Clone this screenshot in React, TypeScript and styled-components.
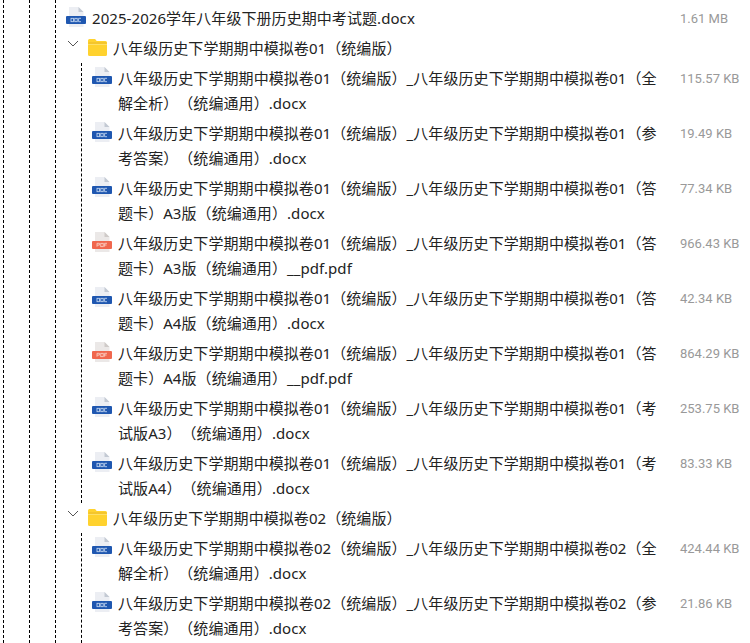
import React from 'react';
import styled, { createGlobalStyle } from 'styled-components';

const Global = createGlobalStyle`
  html, body { margin: 0; padding: 0; background: #fff; height: 643px; overflow: hidden; }
  body { font-family: "Noto Sans", "Noto Sans CJK SC", sans-serif; color: #222; text-spacing-trim: space-all; }
`;

const Page = styled.div`
  width: 750px;
  height: 643px;
  overflow: hidden;
  padding: 3px 0 0 3px;
  box-sizing: border-box;
`;

const OuterGuide = styled.div<{ $gap: number }>`
  border-left: 1px dashed #000;
  margin-top: -3px;
  padding-top: 3px;
  padding-left: ${p => p.$gap}px;
  min-height: 700px;
`;

const FileGuide = styled.div`
  border-left: 1px dashed #000;
  margin-left: 15px;
  padding-left: 10px;
`;

const Row = styled.div<{ $width: number }>`
  display: grid;
  grid-template-columns: 26px ${p => p.$width}px 1fr;
  align-items: start;
  padding: 2.5px 0;
  line-height: 25px;
  font-size: 15px;
`;

const FolderRow = styled.div`
  display: flex;
  align-items: center;
  height: 30px;
  padding-bottom: 2px;
  box-sizing: border-box;
  font-size: 15px;
`;

const Chevron = styled.svg`
  width: 12px;
  height: 8px;
  margin: -6px 9px 0 1px;
  flex: none;
`;

const FolderName = styled.span`
  margin-left: 6px;
  white-space: nowrap;
  letter-spacing: 0.07px;
`;

const IconCell = styled.div`
  height: 25px;
  padding-bottom: 3px;
  box-sizing: border-box;
  display: flex;
  align-items: center;
`;

const Name = styled.div<{ $pad: number }>`
  padding-right: ${p => p.$pad}px;
  word-break: break-all;
  letter-spacing: 0.07px;
`;

const Size = styled.div`
  font-family: Roboto, sans-serif;
  font-size: 13px;
  color: #999;
  white-space: nowrap;
`;

const Doc = () => (
  <svg width="20" height="20" viewBox="0 0 20 20">
    <path d="M3 0h9.500l5 5v15H3z" fill="#eceef3" />
    <path d="M12.500 0l5 5h-5z" fill="#c3c9d3" />
    <rect x="0" y="9" width="20" height="8" rx="1" fill="#1f57b0" />
    <g fill="none" stroke="#cfe0f6" strokeWidth="0.8">
      <rect x="5" y="11.300" width="2.400" height="3.400" />
      <rect x="8.800" y="11.300" width="2.400" height="3.400" />
      <path d="M15 11.300h-2.400v3.400H15" />
    </g>
  </svg>
);

const Pdf = () => (
  <svg width="20" height="20" viewBox="0 0 20 20">
    <path d="M3 0h9.500l5 5v15H3z" fill="#ebe8e7" />
    <path d="M12.500 0l5 5h-5z" fill="#cfcac8" />
    <rect x="0" y="9" width="20" height="8" rx="1" fill="#f0674d" />
    <g fill="none" stroke="#fbd7cc" strokeWidth="0.8">
      <path d="M5 14.700v-3.400h2.400v1.800H5" />
      <rect x="8.800" y="11.300" width="2.400" height="3.400" />
      <path d="M15 11.300h-2.400v3.400M12.600 13h2" />
    </g>
  </svg>
);

const Folder = () => (
  <svg width="19" height="17" viewBox="0 0 19 17">
    <path d="M1.500 0h5.600l1.600 2h8.800a1.500 1.500 0 0 1 1.500 1.500V15.500a1.500 1.500 0 0 1-1.500 1.500H1.500A1.500 1.500 0 0 1 0 15.500V1.500A1.500 1.500 0 0 1 1.500 0z" fill="#ffd22e" />
    <path d="M0.500 4h18" stroke="#e9b92a" strokeWidth="1" />
    <path d="M0 5h19v1H0z" fill="#ffe067" />
  </svg>
);

const ChevronIcon = () => (
  <Chevron viewBox="0 0 12 8">
    <path d="M1 1l5 5 5-5" fill="none" stroke="#555" strokeWidth="1" />
  </Chevron>
);

type FileEntry = { pdf?: boolean; name: string; size: string };

const a = '八年级历史下学期期中模拟卷01（统编版）_八年级历史下学期期中模拟卷01';
const b = '八年级历史下学期期中模拟卷02（统编版）_八年级历史下学期期中模拟卷02';

const group1: FileEntry[] = [
  { name: `${a}（全解全析）（统编通用）.docx`, size: '115.57 KB' },
  { name: `${a}（参考答案）（统编通用）.docx`, size: '19.49 KB' },
  { name: `${a}（答题卡）A3版（统编通用）.docx`, size: '77.34 KB' },
  { pdf: true, name: `${a}（答题卡）A3版（统编通用）__pdf.pdf`, size: '966.43 KB' },
  { name: `${a}（答题卡）A4版（统编通用）.docx`, size: '42.34 KB' },
  { pdf: true, name: `${a}（答题卡）A4版（统编通用）__pdf.pdf`, size: '864.29 KB' },
  { name: `${a}（考试版A3）（统编通用）.docx`, size: '253.75 KB' },
  { name: `${a}（考试版A4）（统编通用）.docx`, size: '83.33 KB' },
];

const group2: FileEntry[] = [
  { name: `${b}（全解全析）（统编通用）.docx`, size: '424.44 KB' },
  { name: `${b}（参考答案）（统编通用）.docx`, size: '21.86 KB' },
];

const Files = ({ items }: { items: FileEntry[] }) => (
  <FileGuide>
    {items.map(f => (
      <Row key={f.name} $width={562}>
        <IconCell>{f.pdf ? <Pdf /> : <Doc />}</IconCell>
        <Name $pad={20}>{f.name}</Name>
        <Size>{f.size}</Size>
      </Row>
    ))}
  </FileGuide>
);

const FolderHeader = ({ name }: { name: string }) => (
  <FolderRow>
    <ChevronIcon />
    <Folder />
    <FolderName>{name}</FolderName>
  </FolderRow>
);

export default function App() {
  return (
    <Page>
      <Global />
      <OuterGuide $gap={25}>
        <OuterGuide $gap={25}>
          <OuterGuide $gap={10}>
            <Row $width={588}>
              <IconCell><Doc /></IconCell>
              <Name $pad={0}>2025-2026学年八年级下册历史期中考试题.docx</Name>
              <Size>1.61 MB</Size>
            </Row>
            <FolderHeader name="八年级历史下学期期中模拟卷01（统编版）" />
            <Files items={group1} />
            <FolderHeader name="八年级历史下学期期中模拟卷02（统编版）" />
            <Files items={group2} />
          </OuterGuide>
        </OuterGuide>
      </OuterGuide>
    </Page>
  );
}
